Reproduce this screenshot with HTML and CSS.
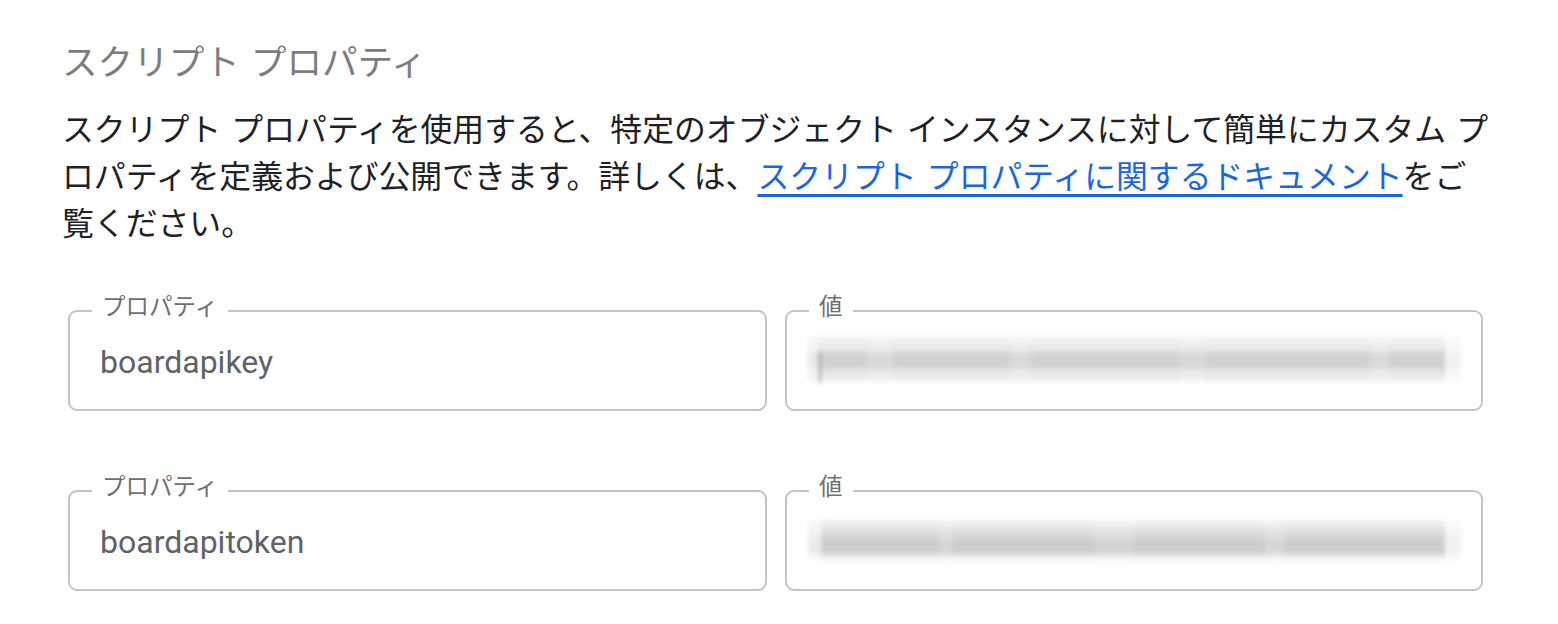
FILE: index.html
```html
<!DOCTYPE html>
<html lang="ja">
<head>
<meta charset="utf-8">
<title>スクリプト プロパティ</title>
<link rel="stylesheet" href="styles.css">
</head>
<body>
<main class="page">
  <h2 class="title">スクリプト プロパティ</h2>
  <p class="desc">スクリプト プロパティを使用すると、特定のオブジェクト インスタンスに対して簡単にカスタム プロパティを定義および公開できます。詳しくは、<a class="link" href="#">スクリプト プロパティに関するドキュメント</a>をご覧ください。</p>
  <div class="fields">
    <fieldset class="field">
      <legend class="label">プロパティ</legend>
      <div class="value">boardapikey</div>
    </fieldset>
    <fieldset class="field">
      <legend class="label">値</legend>
      <div class="value"><div class="blur blur-a"></div></div>
    </fieldset>
    <fieldset class="field">
      <legend class="label">プロパティ</legend>
      <div class="value">boardapitoken</div>
    </fieldset>
    <fieldset class="field">
      <legend class="label">値</legend>
      <div class="value"><div class="blur blur-b"></div></div>
    </fieldset>
  </div>
</main>
</body>
</html>
```
FILE: styles.css
```css
html, body {
  margin: 0;
  padding: 0;
  background: #ffffff;
}

.page {
  padding: 36px 0 0 62px;
  font-family: "Noto Sans CJK JP", "Noto Sans", sans-serif;
}

.title {
  margin: 0;
  font-size: 35.6px;
  line-height: 48px;
  font-weight: 400;
  word-spacing: 3px;
  color: #7d7d7d;
}

.desc {
  margin: 20px 0 0 0;
  width: 1432px;
  font-size: 31.85px;
  line-height: 47px;
  word-spacing: 3px;
  color: #202124;
}

.link {
  color: #1a66e0;
  text-decoration: underline;
  text-decoration-thickness: 3px;
  text-underline-offset: 6px;
}

.fields {
  margin: 48px 0 0 6px;
  width: 1415px;
  display: grid;
  grid-template-columns: 699px 698px;
  column-gap: 18px;
  row-gap: 62px;
}

.field {
  margin: 0;
  padding: 0 0 0 22px;
  border: 2px solid #c4c4c4;
  border-radius: 9px;
  min-width: 0;
}

.label {
  padding: 0 10px 12px 10px;
  font-size: 23.5px;
  line-height: 24px;
  color: #6f6f6f;
}

.value {
  height: 66px;
  padding: 0 0 14px 8px;
  display: flex;
  align-items: center;
  font-family: Roboto, "Noto Sans", sans-serif;
  font-size: 32px;
  color: #5f6368;
}

.blur {
  width: 653px;
  margin-left: -9px;
  filter: blur(2px);
}

.blur-a {
  height: 48px;
  margin-top: -6px;
  background:
    linear-gradient(90deg, #a0a0a0 0, #a0a0a0 2px, transparent 2px) 11px 17px / 2px 31px no-repeat,
    linear-gradient(90deg, rgba(255,255,255,0.5) 0, rgba(255,255,255,0.5) 1.5%, transparent 1.5%, transparent 9%, rgba(255,255,255,0.18) 9%, rgba(255,255,255,0.18) 13%, transparent 13%, transparent 31%, rgba(255,255,255,0.2) 31%, rgba(255,255,255,0.2) 34%, transparent 34%, transparent 57%, rgba(255,255,255,0.15) 57%, rgba(255,255,255,0.15) 61%, transparent 61%, transparent 86%, rgba(255,255,255,0.2) 86%, rgba(255,255,255,0.2) 89%, transparent 89%, transparent 97.5%, rgba(255,255,255,0.7) 97.5%),
    linear-gradient(180deg, #ffffff 0, #f0f0f0 8%, #e9e9e9 30%, #d4d4d4 38%, #cfcfcf 58%, #d8d8d8 70%, #e6e6e6 76%, #ececec 92%, #ffffff 100%);
}

.blur-b {
  height: 46px;
  margin-top: -4px;
  background:
    linear-gradient(90deg, rgba(255,255,255,0.6) 0, rgba(255,255,255,0.6) 2%, transparent 2%, transparent 20%, rgba(255,255,255,0.18) 20%, rgba(255,255,255,0.18) 22%, transparent 22%, transparent 44%, rgba(255,255,255,0.15) 44%, rgba(255,255,255,0.15) 50%, transparent 50%, transparent 70%, rgba(255,255,255,0.18) 70%, rgba(255,255,255,0.18) 73%, transparent 73%, transparent 97.5%, rgba(255,255,255,0.7) 97.5%),
    linear-gradient(180deg, #ffffff 0, #f0f0f0 12%, #e4e4e4 26%, #d8d8d8 40%, #cdcdcd 56%, #cdcdcd 76%, #e8e8e8 84%, #f4f4f4 92%, #ffffff 100%);
}
```
